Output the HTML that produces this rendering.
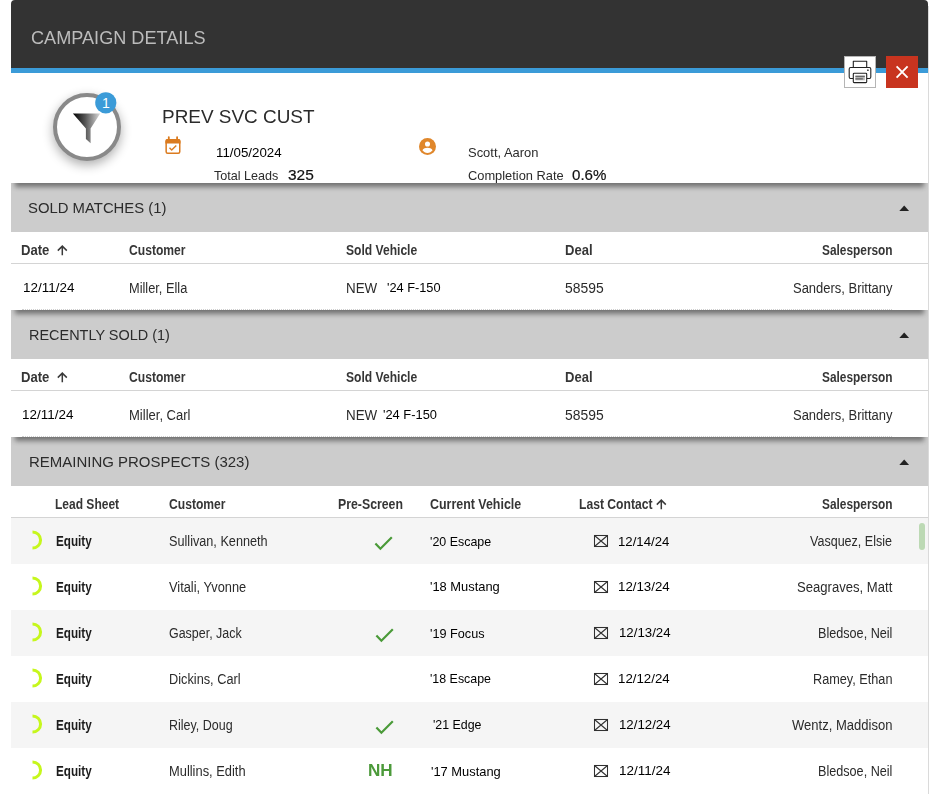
<!DOCTYPE html>
<html lang="en">
<head>
<meta charset="utf-8">
<title>Campaign Details</title>
<style>
html,body{margin:0;padding:0;background:#fff;}
body{width:941px;height:806px;position:relative;overflow:hidden;font-family:"Liberation Sans",sans-serif;}
.abs{position:absolute;}
.t{position:absolute;white-space:pre;line-height:20px;height:20px;transform-origin:0 50%;}
#panel{position:absolute;left:11px;top:6px;width:917px;height:788px;background:#fff;border-right:1px solid #dadada;}
#hdr{position:absolute;left:11px;top:0;width:917px;height:68px;background:#333;border-radius:4px 4px 0 0;}
#bar{position:absolute;left:11px;top:68px;width:917px;height:5px;background:#3b9bd8;}
.sec{position:absolute;left:11px;width:917px;height:49px;background:#cccccc;overflow:hidden;}
.sec i{position:absolute;left:6px;right:6px;top:-8px;height:8px;box-shadow:0 2px 5px 2px rgba(0,0,0,.44);}
.hl{position:absolute;left:11px;width:917px;height:1px;background:#d4d4d4;}
.dl{position:absolute;left:22px;width:870px;height:0;border-top:1px dotted #cfcfcf;}
.stripe{position:absolute;left:11px;width:917px;height:46px;background:#f5f5f5;}
svg{position:absolute;overflow:visible;}
#txt{position:absolute;left:0;top:0;width:941px;height:806px;will-change:transform;}
</style>
</head>
<body>
<div id="panel"></div>
<div id="hdr"></div>
<div id="bar"></div>

<!-- section bars -->
<div class="sec" style="top:183px"><i></i></div>
<div class="sec" style="top:310px"><i></i></div>
<div class="sec" style="top:437px"><i></i></div>

<!-- table header rules -->
<div class="hl" style="top:263px"></div>
<div class="hl" style="top:390px"></div>
<div class="hl" style="top:517px"></div>
<div class="dl" style="top:309px"></div>
<div class="dl" style="top:436px"></div>

<!-- stripes -->
<div class="stripe" style="top:518px"></div>
<div class="stripe" style="top:610px"></div>
<div class="stripe" style="top:702px"></div>

<!-- scrollbar thumb -->
<div class="abs" style="left:919px;top:523px;width:6px;height:27px;border-radius:3px;background:#bcd9b4;"></div>

<!-- print + close buttons -->
<div class="abs" style="left:844px;top:56px;width:30px;height:30px;background:#fff;border:1px solid #b5b5b5;"></div>
<div class="abs" style="left:886px;top:56px;width:32px;height:32px;background:#c8341f;"></div>
<svg style="left:844px;top:56px" width="32" height="32" viewBox="0 0 32 32">
  <g fill="none" stroke="#222" stroke-width="1.1" stroke-linejoin="round">
    <path d="M9.3 11.5V5.3h13.4v6.2"/>
    <path d="M9.3 22.5H6.6a1.4 1.4 0 0 1-1.4-1.4v-8.2a1.4 1.4 0 0 1 1.4-1.4h18.8a1.4 1.4 0 0 1 1.400 1.4v8.2a1.4 1.4 0 0 1-1.4 1.4h-2.7"/>
    <rect x="9.3" y="17.3" width="13.400" height="9.300" rx="0.800" fill="#fff"/>
  </g>
  <rect x="11.400" y="19.700" width="9.400" height="4.600" fill="#b5b5b5"/>
  <rect x="11.400" y="19.700" width="9.400" height="1.300" fill="#666"/>
  <rect x="11.400" y="22.200" width="7.400" height="1.300" fill="#666"/>
  <circle cx="23.900" cy="14.200" r="0.900" fill="#444"/>
</svg>
<svg style="left:886px;top:56px" width="32" height="32" viewBox="0 0 32 32">
  <path d="M10.600 10.400 L21.600 21.600 M21.600 10.400 L10.600 21.600" stroke="#fff" stroke-width="1.900" fill="none"/>
</svg>

<!-- funnel badge -->
<div class="abs" style="left:53px;top:93px;width:60px;height:60px;border:4px solid #898989;border-radius:50%;background:#fff;box-shadow:0 4px 11px rgba(0,0,0,.32);"></div>
<svg style="left:0;top:0" width="941" height="200" viewBox="0 0 941 200">
  <defs><linearGradient id="fg" x1="0" x2="1" y1="0" y2="0"><stop offset="0" stop-color="#000"/><stop offset="0.450" stop-color="#555"/><stop offset="1" stop-color="#dadada"/></linearGradient></defs>
  <polygon points="72.900,113.500 100.200,113.500 90.600,128.500 90.600,143.300 85.900,139 85.900,128.500" fill="url(#fg)"/>
  <circle cx="105.800" cy="102.800" r="10.600" fill="#3b9bd8"/>
</svg>
<span class="t" style="left:102px;top:93px;font-size:14px;color:#fff;transform:scaleX(1.002);">1</span>

<!-- calendar icon -->
<svg style="left:165px;top:136.500px" width="16" height="18" viewBox="0 0 16 18">
  <g fill="none" stroke="#db7b1f" stroke-width="1.500" stroke-linejoin="round">
    <rect x="1.150" y="2.850" width="13.600" height="13.400" rx="1.500"/>
    <path d="M0.400 6.400V4.100a2 2 0 0 1 2-2h11.100a2 2 0 0 1 2 2V6.400z" fill="#db7b1f" stroke="none"/>
    <path d="M3.800 0.100V3M12.100 0.100V3" stroke-width="1.800" stroke-linecap="round"/>
    <path d="M4.500 10.800 L6.700 13 L11.300 8.500" stroke-width="1.400"/>
  </g>
</svg>

<!-- person icon -->
<svg style="left:419.400px;top:138.300px" width="17" height="17" viewBox="0 0 24 24">
  <circle cx="12" cy="12" r="12" fill="#e0872b"/>
  <circle cx="12" cy="8.400" r="3.600" fill="#fff"/>
  <path d="M4.800 17.300c1.500-2.400 4.300-3.500 7.200-3.500s5.700 1.100 7.200 3.500c-1.700 2.300-4.300 3.700-7.200 3.700s-5.500-1.400-7.200-3.700z" fill="#fff"/>
</svg>

<!-- carets -->
<svg style="left:0;top:0" width="941" height="806" viewBox="0 0 941 806">
  <g fill="#222">
    <polygon points="899.300,211 909.100,211 904.200,205.600"/>
    <polygon points="899.300,338 909.100,338 904.200,332.600"/>
    <polygon points="899.300,465 909.100,465 904.200,459.600"/>
  </g>
  <!-- sort arrows -->
  <g fill="none" stroke="#3a3a3a" stroke-width="1.500">
    <path d="M62.300 255.200V246.400M57.800 250.600L62.300 246.100L66.800 250.600"/>
    <path d="M62.300 382.200V373.400M57.800 377.600L62.300 373.100L66.800 377.600"/>
    <path d="M661.300 509.200V500.400M656.800 504.600L661.300 500.100L665.800 504.600"/>
  </g>
  <!-- arcs -->
  <g fill="none" stroke="#c6f71c" stroke-width="3" stroke-linecap="butt">
    <path d="M32.500 531.9A8.100 8.100 0 0 1 32.500 548.1" />
    <path d="M32.500 577.9A8.100 8.100 0 0 1 32.500 594.1" />
    <path d="M32.500 623.9A8.100 8.100 0 0 1 32.500 640.1" />
    <path d="M32.500 669.9A8.100 8.100 0 0 1 32.500 686.1" />
    <path d="M32.500 715.9A8.100 8.100 0 0 1 32.500 732.1" />
    <path d="M32.500 761.9A8.100 8.100 0 0 1 32.500 778.1" />
  </g>
  <!-- checks -->
  <g fill="none" stroke="#4a9a38" stroke-width="2.200">
    <path d="M375.400 543.500L380.400 548.700L391.800 537.300"/>
    <path d="M376.400 635.500L381.400 640.700L392.800 629.300"/>
    <path d="M376.400 727.500L381.400 732.700L392.800 721.300"/>
  </g>
  <!-- envelopes -->
  <g fill="none" stroke="#303030" stroke-width="1.050">
    <rect x="594.500" y="535.5" width="13" height="11"/><path d="M594.500 535.5L607.500 546.5M607.500 535.5L594.500 546.5"/>
    <rect x="594.500" y="581.5" width="13" height="11"/><path d="M594.500 581.5L607.500 592.5M607.500 581.5L594.500 592.5"/>
    <rect x="594.500" y="627.5" width="13" height="11"/><path d="M594.500 627.5L607.500 638.5M607.500 627.5L594.500 638.5"/>
    <rect x="594.500" y="673.5" width="13" height="11"/><path d="M594.500 673.5L607.500 684.5M607.500 673.5L594.500 684.5"/>
    <rect x="594.500" y="719.5" width="13" height="11"/><path d="M594.500 719.5L607.500 730.5M607.500 719.5L594.500 730.5"/>
    <rect x="594.500" y="765.5" width="13" height="11"/><path d="M594.500 765.5L607.500 776.5M607.500 765.5L594.500 776.5"/>
  </g>
</svg>

<div id="txt">
<span class="t" style="left:30.5px;top:27.6px;font-size:19px;color:#bcbcbc;transform:scaleX(0.954);">CAMPAIGN DETAILS</span>
<span class="t" style="left:161.5px;top:106.5px;font-size:18px;color:#2b2b2b;transform:scaleX(1.052);">PREV SVC CUST</span>
<span class="t" style="left:215.7px;top:142.7px;font-size:13px;color:#000;transform:scaleX(1.023);">11/05/2024</span>
<span class="t" style="left:214.4px;top:166.1px;font-size:13px;color:#2b2b2b;transform:scaleX(0.968);">Total Leads</span>
<span class="t" style="left:287.9px;top:165.4px;font-size:15px;color:#111;transform:scaleX(1.029);-webkit-text-stroke:0.2px;">325</span>
<span class="t" style="left:468.3px;top:142.7px;font-size:13px;color:#2b2b2b;transform:scaleX(0.995);">Scott, Aaron</span>
<span class="t" style="left:468.4px;top:166.1px;font-size:13px;color:#2b2b2b;transform:scaleX(0.988);">Completion Rate</span>
<span class="t" style="left:572.2px;top:165.4px;font-size:15px;color:#111;transform:scaleX(1.007);-webkit-text-stroke:0.2px;">0.6%</span>
<span class="t" style="left:27.6px;top:198.2px;font-size:15px;color:#2b2b2b;transform:scaleX(0.991);">SOLD MATCHES (1)</span>
<span class="t" style="left:28.9px;top:325.2px;font-size:15px;color:#2b2b2b;transform:scaleX(0.964);">RECENTLY SOLD (1)</span>
<span class="t" style="left:28.9px;top:452.2px;font-size:15px;color:#2b2b2b;transform:scaleX(0.998);">REMAINING PROSPECTS (323)</span>
<span class="t" style="left:20.8px;top:240.1px;font-size:14px;color:#363636;font-weight:700;transform:scaleX(0.936);">Date</span>
<span class="t" style="left:128.8px;top:240.1px;font-size:14px;color:#363636;font-weight:700;transform:scaleX(0.865);">Customer</span>
<span class="t" style="left:346.3px;top:240.1px;font-size:14px;color:#363636;font-weight:700;transform:scaleX(0.863);">Sold Vehicle</span>
<span class="t" style="left:564.6px;top:240.1px;font-size:14px;color:#363636;font-weight:700;transform:scaleX(0.930);">Deal</span>
<span class="t" style="left:822.2px;top:240.1px;font-size:14px;color:#363636;font-weight:700;transform:scaleX(0.848);">Salesperson</span>
<span class="t" style="left:23.3px;top:278.0px;font-size:13px;color:#000;transform:scaleX(1.035);">12/11/24</span>
<span class="t" style="left:128.8px;top:277.6px;font-size:14px;color:#2b2b2b;transform:scaleX(0.914);">Miller, Ella</span>
<span class="t" style="left:346.3px;top:277.6px;font-size:14px;color:#2b2b2b;transform:scaleX(0.956);">NEW</span>
<span class="t" style="left:386.8px;top:277.5px;font-size:13px;color:#000;transform:scaleX(0.983);">'24 F-150</span>
<span class="t" style="left:564.6px;top:277.6px;font-size:14px;color:#2b2b2b;transform:scaleX(0.992);">58595</span>
<span class="t" style="left:793.1px;top:277.6px;font-size:14px;color:#2b2b2b;transform:scaleX(0.926);">Sanders, Brittany</span>
<span class="t" style="left:20.8px;top:367.1px;font-size:14px;color:#363636;font-weight:700;transform:scaleX(0.936);">Date</span>
<span class="t" style="left:128.8px;top:367.1px;font-size:14px;color:#363636;font-weight:700;transform:scaleX(0.865);">Customer</span>
<span class="t" style="left:346.3px;top:367.1px;font-size:14px;color:#363636;font-weight:700;transform:scaleX(0.863);">Sold Vehicle</span>
<span class="t" style="left:564.6px;top:367.1px;font-size:14px;color:#363636;font-weight:700;transform:scaleX(0.930);">Deal</span>
<span class="t" style="left:822.2px;top:367.1px;font-size:14px;color:#363636;font-weight:700;transform:scaleX(0.848);">Salesperson</span>
<span class="t" style="left:22.3px;top:405.0px;font-size:13px;color:#000;transform:scaleX(1.035);">12/11/24</span>
<span class="t" style="left:128.7px;top:404.6px;font-size:14px;color:#2b2b2b;transform:scaleX(0.930);">Miller, Carl</span>
<span class="t" style="left:346.3px;top:404.6px;font-size:14px;color:#2b2b2b;transform:scaleX(0.956);">NEW</span>
<span class="t" style="left:383.4px;top:404.5px;font-size:13px;color:#000;transform:scaleX(0.990);">'24 F-150</span>
<span class="t" style="left:564.6px;top:404.6px;font-size:14px;color:#2b2b2b;transform:scaleX(0.992);">58595</span>
<span class="t" style="left:793.1px;top:404.6px;font-size:14px;color:#2b2b2b;transform:scaleX(0.926);">Sanders, Brittany</span>
<span class="t" style="left:55.0px;top:494.1px;font-size:14px;color:#363636;font-weight:700;transform:scaleX(0.858);">Lead Sheet</span>
<span class="t" style="left:168.8px;top:494.1px;font-size:14px;color:#363636;font-weight:700;transform:scaleX(0.865);">Customer</span>
<span class="t" style="left:337.6px;top:494.1px;font-size:14px;color:#363636;font-weight:700;transform:scaleX(0.879);">Pre-Screen</span>
<span class="t" style="left:429.7px;top:494.1px;font-size:14px;color:#363636;font-weight:700;transform:scaleX(0.888);">Current Vehicle</span>
<span class="t" style="left:578.6px;top:494.1px;font-size:14px;color:#363636;font-weight:700;transform:scaleX(0.867);">Last Contact</span>
<span class="t" style="left:822.2px;top:494.1px;font-size:14px;color:#363636;font-weight:700;transform:scaleX(0.848);">Salesperson</span>
<span class="t" style="left:55.5px;top:531.1px;font-size:14px;color:#1c1c1c;font-weight:700;transform:scaleX(0.835);">Equity</span>
<span class="t" style="left:169.2px;top:531.1px;font-size:14px;color:#2b2b2b;transform:scaleX(0.905);">Sullivan, Kenneth</span>
<span class="t" style="left:430.2px;top:531.5px;font-size:13px;color:#000;transform:scaleX(0.957);">'20 Escape</span>
<span class="t" style="left:617.5px;top:531.5px;font-size:13px;color:#000;transform:scaleX(1.015);">12/14/24</span>
<span class="t" style="left:810.1px;top:531.1px;font-size:14px;color:#2b2b2b;transform:scaleX(0.895);">Vasquez, Elsie</span>
<span class="t" style="left:55.5px;top:577.1px;font-size:14px;color:#1c1c1c;font-weight:700;transform:scaleX(0.835);">Equity</span>
<span class="t" style="left:169.2px;top:577.1px;font-size:14px;color:#2b2b2b;transform:scaleX(0.915);">Vitali, Yvonne</span>
<span class="t" style="left:429.8px;top:577.0px;font-size:13px;color:#000;transform:scaleX(0.991);">'18 Mustang</span>
<span class="t" style="left:617.6px;top:576.7px;font-size:13px;color:#000;transform:scaleX(1.021);">12/13/24</span>
<span class="t" style="left:797.1px;top:577.1px;font-size:14px;color:#2b2b2b;transform:scaleX(0.935);">Seagraves, Matt</span>
<span class="t" style="left:55.5px;top:623.1px;font-size:14px;color:#1c1c1c;font-weight:700;transform:scaleX(0.835);">Equity</span>
<span class="t" style="left:169.2px;top:623.1px;font-size:14px;color:#2b2b2b;transform:scaleX(0.889);">Gasper, Jack</span>
<span class="t" style="left:429.8px;top:623.5px;font-size:13px;color:#000;transform:scaleX(0.975);">'19 Focus</span>
<span class="t" style="left:618.7px;top:622.7px;font-size:13px;color:#000;transform:scaleX(1.019);">12/13/24</span>
<span class="t" style="left:818.1px;top:623.1px;font-size:14px;color:#2b2b2b;transform:scaleX(0.902);">Bledsoe, Neil</span>
<span class="t" style="left:55.5px;top:669.1px;font-size:14px;color:#1c1c1c;font-weight:700;transform:scaleX(0.835);">Equity</span>
<span class="t" style="left:169.2px;top:669.1px;font-size:14px;color:#2b2b2b;transform:scaleX(0.911);">Dickins, Carl</span>
<span class="t" style="left:429.8px;top:669.0px;font-size:13px;color:#000;transform:scaleX(0.954);">'18 Escape</span>
<span class="t" style="left:617.6px;top:668.7px;font-size:13px;color:#000;transform:scaleX(1.021);">12/12/24</span>
<span class="t" style="left:813.1px;top:669.1px;font-size:14px;color:#2b2b2b;transform:scaleX(0.906);">Ramey, Ethan</span>
<span class="t" style="left:55.5px;top:715.1px;font-size:14px;color:#1c1c1c;font-weight:700;transform:scaleX(0.835);">Equity</span>
<span class="t" style="left:169.2px;top:715.1px;font-size:14px;color:#2b2b2b;transform:scaleX(0.892);">Riley, Doug</span>
<span class="t" style="left:432.7px;top:715.0px;font-size:13px;color:#000;transform:scaleX(0.952);">'21 Edge</span>
<span class="t" style="left:618.7px;top:714.7px;font-size:13px;color:#000;transform:scaleX(1.019);">12/12/24</span>
<span class="t" style="left:792.0px;top:715.1px;font-size:14px;color:#2b2b2b;transform:scaleX(0.931);">Wentz, Maddison</span>
<span class="t" style="left:55.5px;top:761.1px;font-size:14px;color:#1c1c1c;font-weight:700;transform:scaleX(0.835);">Equity</span>
<span class="t" style="left:169.2px;top:761.1px;font-size:14px;color:#2b2b2b;transform:scaleX(0.920);">Mullins, Edith</span>
<span class="t" style="left:368.1px;top:761.3px;font-size:16px;color:#4c9a3a;font-weight:700;transform:scaleX(1.068);">NH</span>
<span class="t" style="left:430.9px;top:761.5px;font-size:13px;color:#000;transform:scaleX(0.991);">'17 Mustang</span>
<span class="t" style="left:618.7px;top:760.7px;font-size:13px;color:#000;transform:scaleX(1.039);">12/11/24</span>
<span class="t" style="left:818.1px;top:761.1px;font-size:14px;color:#2b2b2b;transform:scaleX(0.902);">Bledsoe, Neil</span>
</div>
</body>
</html>
